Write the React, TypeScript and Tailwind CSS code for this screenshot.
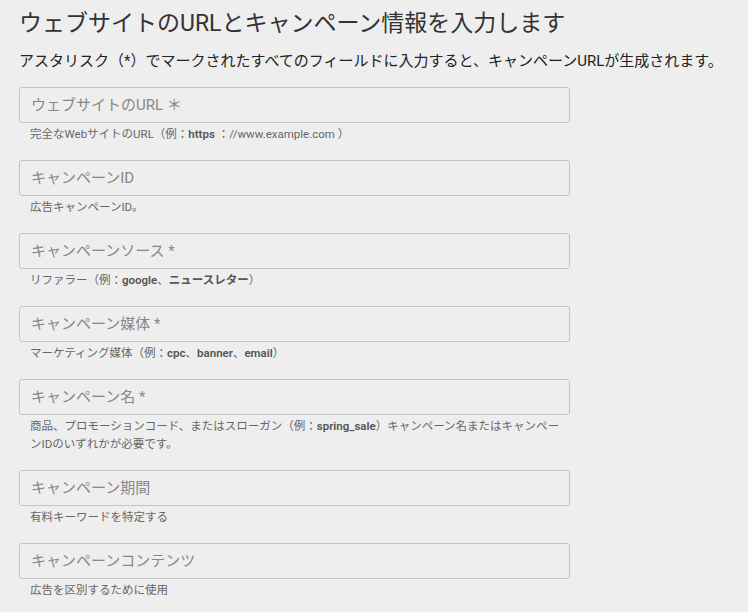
export default function App() {
  const fields: [string, React.ReactNode][] = [
    ["ウェブサイトのURL ＊", <>完全なWebサイトのURL（例：<b>https</b> ：//www.example.com ）</>],
    ["キャンペーンID", <>広告キャンペーンID。</>],
    ["キャンペーンソース *", <>リファラー（例：<b>google</b>、<b>ニュースレター</b>）</>],
    ["キャンペーン媒体 *", <>マーケティング媒体（例：<b>cpc</b>、<b>banner</b>、<b>email</b>）</>],
    ["キャンペーン名 *", <>商品、プロモーションコード、またはスローガン（例：<b>spring_sale</b>）キャンペーン名またはキャンペーンIDのいずれかが必要です。</>],
    ["キャンペーン期間", <>有料キーワードを特定する</>],
    ["キャンペーンコンテンツ", <>広告を区別するために使用</>],
  ];
  return (
    <div className="w-[748px] h-[612px] bg-[#eeeeee] overflow-hidden pl-[19px] pt-[8px]" style={{ fontFamily: 'Roboto, "Noto Sans CJK JP", sans-serif' }}>
      <h1 className="text-[23px] leading-[32px] text-[#333]">ウェブサイトのURLとキャンペーン情報を入力します</h1>
      <p className="text-[15px] leading-[20px] mt-[11px] text-[#222]">アスタリスク（*）でマークされたすべてのフィールドに入力すると、キャンペーンURLが生成されます。</p>
      <div className="mt-[16px] flex flex-col w-[551px]">
        {fields.map(([label, help], i) => (
          <div key={i} className="mb-[17px]">
            <div className="h-[36px] border border-[#c4c4c4] rounded-[3px] bg-[#eeeeee] flex items-center px-[11px] text-[15px] text-[#888]">{label}</div>
            <div className="mt-[2px] pl-[11px] pr-[10px] text-[11.5px] leading-[18px] text-[#666] [&_b]:font-semibold [&_b]:text-[#555]">{help}</div>
          </div>
        ))}
      </div>
    </div>
  );
}
